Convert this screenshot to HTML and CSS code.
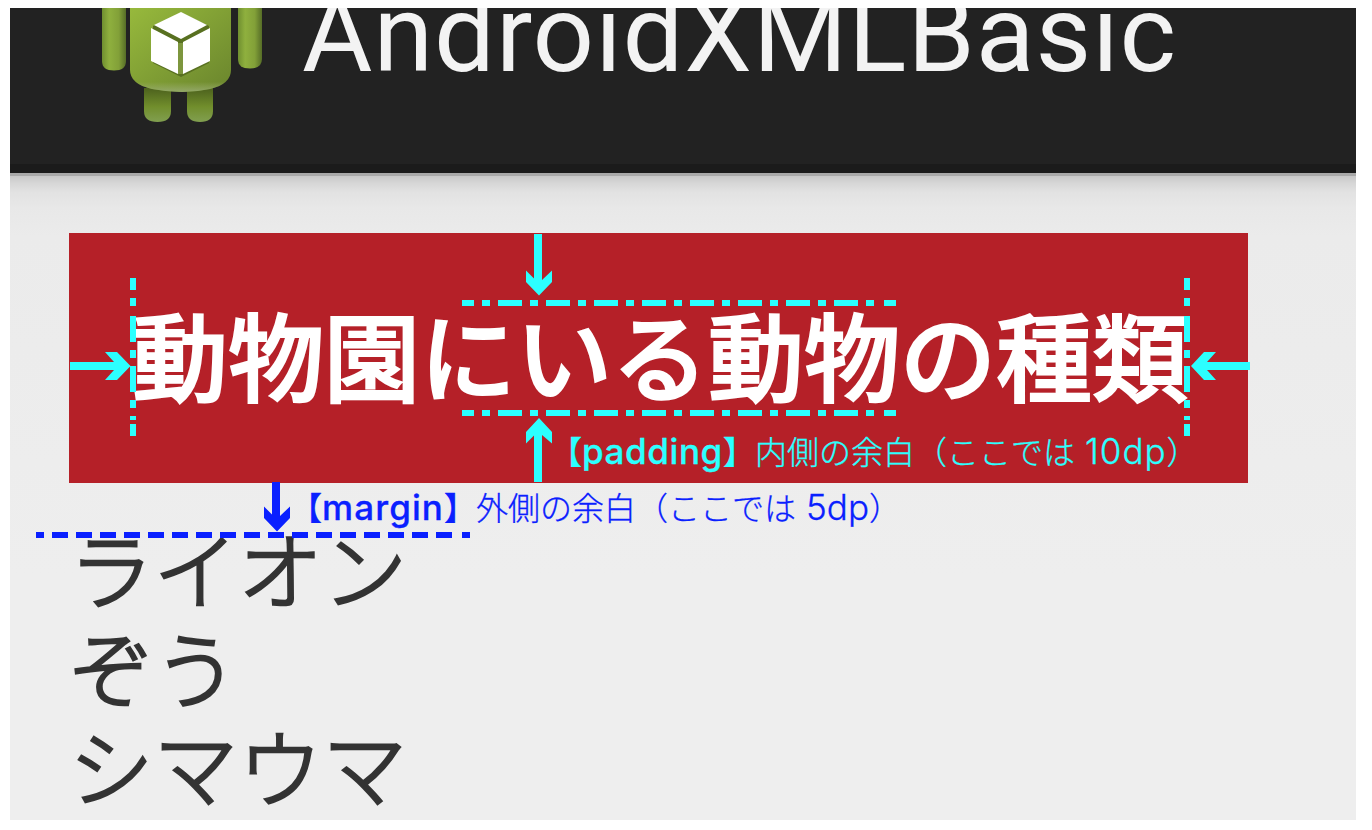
FILE: index.html
```html
<!DOCTYPE html>
<html lang="ja">
<head>
<meta charset="utf-8">
<title>AndroidXMLBasic</title>
<link rel="stylesheet" href="styles.css">
</head>
<body>
<div class="screen">
  <header class="action-bar">
    <svg class="launcher" width="162" height="116" viewBox="100 8 162 116">
      <defs>
        <linearGradient id="green" x1="0" y1="0" x2="1" y2="1">
          <stop offset="0" stop-color="#97b93c"/><stop offset="1" stop-color="#6a852d"/>
        </linearGradient>
        <linearGradient id="limb" x1="0" y1="0" x2="1" y2="0">
          <stop offset="0" stop-color="#6f8f30"/><stop offset=".3" stop-color="#8fb03e"/><stop offset=".7" stop-color="#82a038"/><stop offset="1" stop-color="#566d27"/>
        </linearGradient>
        <linearGradient id="leg" x1="0" y1="0" x2="0" y2="1">
          <stop offset="0" stop-color="#4c611d"/><stop offset=".55" stop-color="#718e2c"/><stop offset="1" stop-color="#819f50"/>
        </linearGradient>
        <linearGradient id="rim" x1="0" y1="0" x2="0" y2="1">
          <stop offset=".88" stop-color="#9aae67" stop-opacity="0"/><stop offset="1" stop-color="#93a86a"/>
        </linearGradient>
      </defs>
      <path d="M102 8h24v53q0 9.500-12 9.500t-12-9.500z" fill="url(#limb)"/>
      <path d="M238 8h24v51q0 9.500-12 9.500t-12-9.500z" fill="url(#limb)"/>
      <path d="M144 88h27v23q0 11-13.500 11t-13.500-11z" fill="url(#leg)"/>
      <path d="M187 88h26v23q0 11-13 11t-13-11z" fill="url(#leg)"/>
      <path d="M130 8h101v62q0 14-21 19-27 6-58 0-22-5-22-19z" fill="url(#green)"/>
      <path d="M130 8h101v62q0 14-21 19-27 6-58 0-22-5-22-19z" fill="url(#rim)"/>
      <path d="M153 26l28-13 28 13v37l-28 14-28-14z" fill="#587020"/>
      <path d="M181 12l26 13-26 14-27-14z" fill="#fff"/>
      <path d="M151 28l27 14v32l-27-13z" fill="#fff"/>
      <path d="M183 42l27-14v33l-27 13z" fill="#fff"/>
      <path d="M178 43h5v31h-5z" fill="#7d963e"/>
    </svg>
    <h1 class="app-title">AndroidXMLBasic</h1>
  </header>
  <main class="content">
    <h2 class="heading">動物園にいる動物の種類</h2>
    <ul class="animals">
      <li>ライオン</li>
      <li>ぞう</li>
      <li>シマウマ</li>
    </ul>
  </main>
  <p class="note note-padding"><b>【<span class="term">padding</span>】</b><span class="desc">内側の余白（ここでは <span class="dp">10dp</span>）</span></p>
  <p class="note note-margin"><b>【<span class="term">margin</span>】</b><span class="desc">外側の余白（ここでは <span class="dp">5dp</span>）</span></p>
  <svg class="guides" width="1346" height="812" viewBox="10 8 1346 812">
    <g class="cyan-line">
      <path d="M462 303H897M462 413H897" stroke-dasharray="12 8 8 8 24 8 8 8 24 8 8 8 24 8 8 8 24 8 8 8 24 8 8 8 24 8 8 8 24 8 8 8 24 8 8 10 12 99"/>
      <path d="M133 278V436M1187 278V436" stroke-dasharray="12 8 8 10 26 8 8 8 26 8 8 8 4 4 12 99"/>
    </g>
    <path class="blue-line" d="M36 535H44M462 535H470"/>
    <path class="blue-line" d="M52 535H452" stroke-dasharray="16 8"/>
    <g class="cyan-arrow">
      <path d="M534 234h8v46l10-9.500V282l-13 13.500L526 282v-11.500l8 8z"/>
      <path d="M534 482h8v-47l10 8.500V432l-13-14-13 14v11.500l8-8z"/>
      <path d="M70 362h44l-9-10h12l13.500 14L117 380h-12l9-10H70z"/>
      <path d="M1250 362h-43l9-10h-12l-13 14 13 14h12l-9-10h43z"/>
    </g>
    <path class="blue-arrow" d="M272 482h8v34l10-9.500V518l-13 13.500L264 518v-11.500l8 8z"/>
  </svg>
</div>
</body>
</html>
```
FILE: styles.css
```css
body {
  margin: 0;
  padding: 8px 16px 10px 10px;
  background: #fff;
  font-family: "Liberation Sans", "Noto Sans CJK JP", sans-serif;
}
h1, h2, ul, p { margin: 0; padding: 0; font-weight: 400; }
.screen {
  position: relative;
  height: 812px;
  overflow: hidden;
  background: #eee;
}
.action-bar {
  box-sizing: border-box;
  display: flex;
  align-items: flex-start;
  height: 165px;
  padding-left: 90px;
  background: #222;
  border-bottom: 9px solid #1b1b1b;
}
.launcher { flex: none; }
.app-title {
  margin: -37px 0 0 40px;
  color: #f3f3f3;
  font: 400 108px/126px Roboto, sans-serif;
  letter-spacing: 1px;
  white-space: nowrap;
}
.content {
  height: 587px;
  padding: 57px 108px 0 59px;
  border-top: 3px solid #a9a9a9;
  background: linear-gradient(#c8c8c8, #d6d6d6 7px, #e2e2e2 16px, #e8e8e8 32px, #ebebeb 60px, #eee 400px);
}
.heading {
  box-sizing: border-box;
  height: 250px;
  padding: 62px 0 0 63px;
  background: #b52028;
  color: #fff;
  font: 500 96px/116px "Noto Sans CJK JP", sans-serif;
  -webkit-text-stroke: 2px #fff;
  white-space: nowrap;
}
.animals {
  padding-top: 34px;
  list-style: none;
  color: #333;
  font: 300 84.500px/99px "Noto Sans CJK JP", sans-serif;
  -webkit-text-stroke: 2.500px #333;
}
.note {
  position: absolute;
  display: flex;
  align-items: baseline;
  font: 300 32px/48px "Noto Sans CJK JP", sans-serif;
  -webkit-text-stroke: .3px currentColor;
  white-space: nowrap;
}
.note b { margin-left: -20px; font-weight: 500; }
.note .term { font: 500 35px/1 Inter, sans-serif; letter-spacing: .6px; }
.note-margin .term { letter-spacing: 1.100px; }
.note .dp { margin-left: 3px; font: 300 35px/1 Inter, sans-serif; letter-spacing: 1px; }
.note-margin .dp { letter-spacing: 0; }
.note-padding { left: 560px; top: 418px; color: #2cffff; }
.note-margin { left: 300px; top: 474px; color: #0a20ff; }
.guides { position: absolute; left: 0; top: 0; }
.cyan-line { fill: none; stroke: #2cffff; stroke-width: 6; }
.blue-line { fill: none; stroke: #0a20ff; stroke-width: 6; }
.cyan-arrow { fill: #2cffff; }
.blue-arrow { fill: #0a20ff; }
```
